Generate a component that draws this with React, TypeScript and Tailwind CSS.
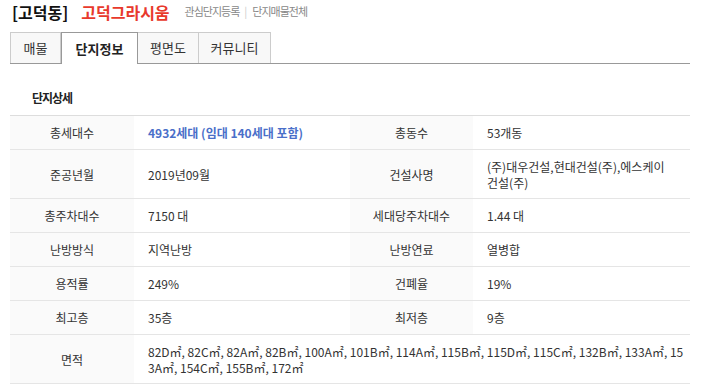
import { ReactNode } from 'react';

const tabs = [
  { label: '매물', width: 'w-[51px]' },
  { label: '단지정보', width: 'w-[77px]', active: true },
  { label: '평면도', width: 'w-[62px]' },
  { label: '커뮤니티', width: 'w-[73px]' },
];

function Label({ children }: { children: ReactNode }) {
  return (
    <td className="bg-[#fafafa] pb-[8px] pt-[9px] text-center align-middle leading-[16px] text-[#333]">
      {children}
    </td>
  );
}

function Value({
  children,
  colSpan,
  multi,
}: {
  children: ReactNode;
  colSpan?: number;
  multi?: boolean;
}) {
  return (
    <td
      colSpan={colSpan}
      className={`pb-[8px] pl-[14px] pt-[9px] align-middle text-[#333] ${multi ? 'leading-[15.5px]' : 'leading-[16px]'}`}
    >
      {children}
    </td>
  );
}

export default function App() {
  return (
    <div
      className="h-[391px] w-[702px] overflow-hidden bg-white text-[12px] text-[#333]"
      style={{ fontFamily: '"Noto Sans CJK KR", "Noto Sans", sans-serif' }}
    >
      <div className="flex h-[22px] items-center pl-[12px] pt-[1px]">
        <span className="text-[16px] font-bold text-[#111]">[고덕동]</span>
        <span className="ml-[13px] text-[16px] font-bold text-[#e8392c]">고덕그라시움</span>
        <span className="ml-[15px] text-[11px] tracking-[-1px] text-[#888]">관심단지등록</span>
        <span className="mx-[5px] text-[11px] text-[#ccc]">|</span>
        <span className="text-[11px] tracking-[-1px] text-[#888]">단지매물전체</span>
      </div>

      <div className="ml-[10px] mt-[10px] flex h-[32px] w-[680px] border-b border-[#999]">
        {tabs.map((t) =>
          t.active ? (
            <div
              key={t.label}
              className={`${t.width} relative -mb-px flex items-center justify-center border border-b-0 border-[#999] bg-white text-[13px] font-bold text-[#222]`}
            >
              {t.label}
            </div>
          ) : (
            <div
              key={t.label}
              className={`${t.width} flex items-center justify-center border border-b-0 border-[#ccc] bg-[#f8f8f8] text-[13px] text-[#333] -ml-px first:ml-0`}
            >
              {t.label}
            </div>
          ),
        )}
      </div>

      <div className="ml-[32px] mt-[27px] text-[12px] font-bold leading-[14px] tracking-[-1px] text-[#222]">
        단지상세
      </div>

      <table className="ml-[10px] mt-[10px] w-[680px] table-fixed border-collapse border-t border-[#ddd]">
        <colgroup>
          <col className="w-[124px]" />
          <col className="w-[216px]" />
          <col className="w-[123px]" />
          <col className="w-[217px]" />
        </colgroup>
        <tbody>
          <tr className="border-b border-[#e5e5e5]">
            <Label>총세대수</Label>
            <Value>
              <span className="font-bold text-[#4a6fc9]">4932세대 (임대 140세대 포함)</span>
            </Value>
            <Label>총동수</Label>
            <Value>53개동</Value>
          </tr>
          <tr className="border-b border-[#e5e5e5]">
            <Label>준공년월</Label>
            <Value>2019년09월</Value>
            <Label>건설사명</Label>
            <Value multi>
              (주)대우건설,현대건설(주),에스케이
              <br />
              건설(주)
            </Value>
          </tr>
          <tr className="border-b border-[#e5e5e5]">
            <Label>총주차대수</Label>
            <Value>7150 대</Value>
            <Label>세대당주차대수</Label>
            <Value>1.44 대</Value>
          </tr>
          <tr className="border-b border-[#e5e5e5]">
            <Label>난방방식</Label>
            <Value>지역난방</Value>
            <Label>난방연료</Label>
            <Value>열병합</Value>
          </tr>
          <tr className="border-b border-[#e5e5e5]">
            <Label>용적률</Label>
            <Value>249%</Value>
            <Label>건폐율</Label>
            <Value>19%</Value>
          </tr>
          <tr className="border-b border-[#e5e5e5]">
            <Label>최고층</Label>
            <Value>35층</Value>
            <Label>최저층</Label>
            <Value>9층</Value>
          </tr>
          <tr className="border-b border-[#e5e5e5]">
            <Label>면적</Label>
            <Value colSpan={3} multi>
              <div className="whitespace-nowrap">
                82D㎡, 82C㎡, 82A㎡, 82B㎡, 100A㎡, 101B㎡, 114A㎡, 115B㎡, 115D㎡, 115C㎡, 132B㎡, 133A㎡, 15
                <br />
                3A㎡, 154C㎡, 155B㎡, 172㎡
              </div>
            </Value>
          </tr>
        </tbody>
      </table>
    </div>
  );
}
